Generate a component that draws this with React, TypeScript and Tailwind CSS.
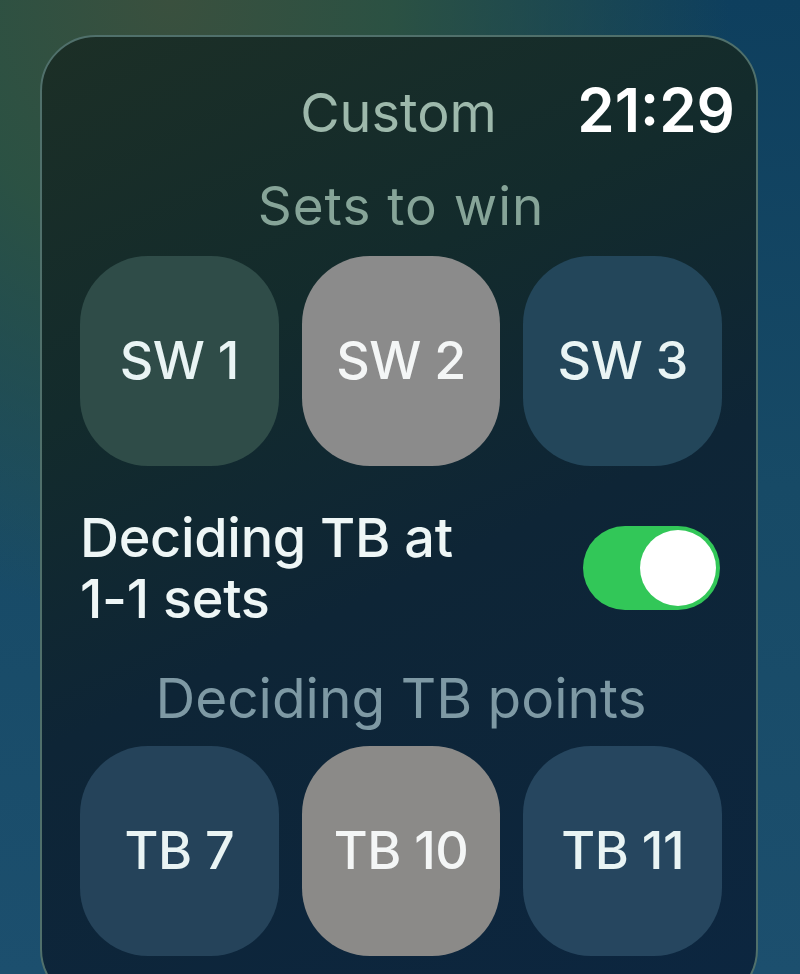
import React from "react";

const font = { fontFamily: "Inter, 'Liberation Sans', sans-serif" };

function Choice({ label, cls }: { label: string; cls: string }) {
  return (
    <div
      className={`h-[210px] rounded-[68px] flex items-center justify-center text-[52px] font-medium leading-none text-[#e9f4f4] tracking-[-0.5px] ${cls}`}
    >
      {label}
    </div>
  );
}

export default function App() {
  return (
    <div
      style={font}
      className="w-[800px] h-[974px] overflow-hidden bg-[radial-gradient(ellipse_560px_620px_at_170px_0px,#3a503e_0%,#2e5340e6_40%,#2e534000_100%),linear-gradient(180deg,#0e3f5e_0%,#174a66_50%,#1c4f6e_100%)] pl-[40px] pr-[42px] pt-[35px]"
    >
      <div className="h-[970px] rounded-[56px] border-2 border-[#50706b] bg-[linear-gradient(155deg,#1c2f26_0%,#132b2c_30%,#0e2536_55%,#0c2640_100%)] pl-[38px] pr-[34px] pt-[43px]">
        {/* header */}
        <div className="grid grid-cols-[1fr_auto_1fr] items-baseline">
          <div />
          <div className="text-[54px] leading-none text-[#9db8ab] -ml-[5px]">Custom</div>
          <div className="justify-self-end -mr-[13px] text-[60px] leading-none font-semibold text-white">
            21:29
          </div>
        </div>

        <div className="mt-[40px] text-center text-[53px] leading-none text-[#86a498] tracking-[1px]">
          Sets to win
        </div>

        <div className="mt-[23px] grid grid-cols-3 gap-[23px]">
          <Choice label="SW 1" cls="bg-[#2f4c48]" />
          <Choice label="SW 2" cls="bg-[#8b8b8b] text-[#f4f6f6]" />
          <Choice label="SW 3" cls="bg-[#23465a]" />
        </div>

        <div className="mt-[41px] flex items-center justify-between">
          <div className="text-[54px] font-medium leading-[61px] text-[#eef6f6] tracking-[-0.3px]">
            Deciding TB at
            <br />
            1-1 sets
          </div>
          <div className="w-[137px] h-[84px] rounded-full bg-[#32c758] flex items-center justify-end pr-[4px] mr-[2px]">
            <div className="w-[76px] h-[76px] rounded-full bg-white" />
          </div>
        </div>

        <div className="mt-[42px] text-center text-[55px] leading-none text-[#7e99a4]">
          Deciding TB points
        </div>

        <div className="mt-[20px] grid grid-cols-3 gap-[23px]">
          <Choice label="TB 7" cls="bg-[#25435a]" />
          <Choice label="TB 10" cls="bg-[#8b8a88] text-[#f4f6f6]" />
          <Choice label="TB 11" cls="bg-[#26465f]" />
        </div>
      </div>
    </div>
  );
}
